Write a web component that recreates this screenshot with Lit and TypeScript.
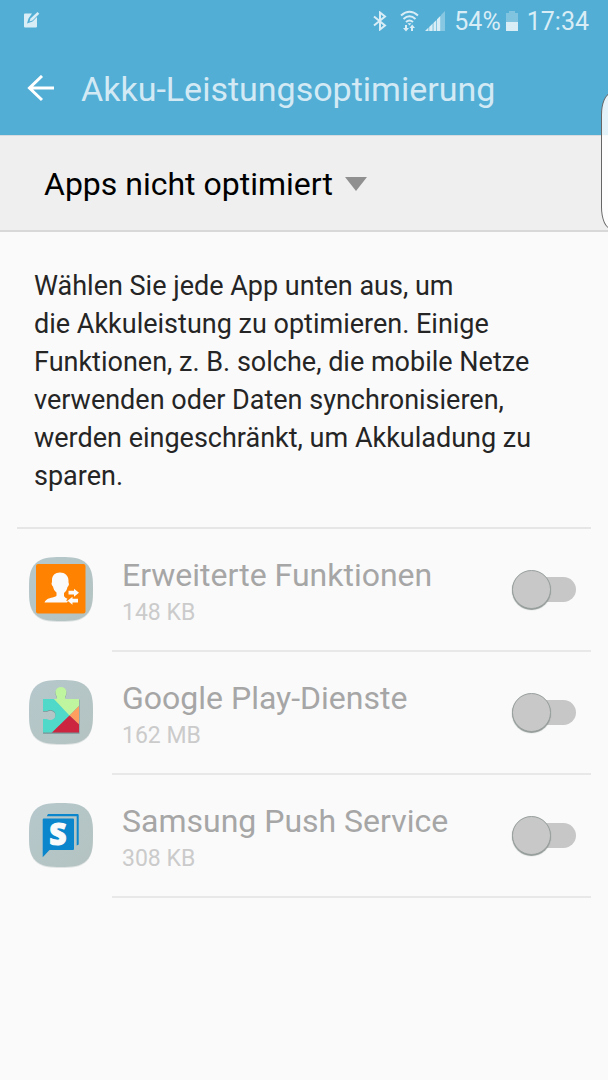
import { LitElement, html, css, svg } from "lit";
import { customElement, property } from "lit/decorators.js";

type IconName = "contacts" | "play" | "push";

interface AppEntry {
  id: string;
  name: string;
  size: string;
  icon: IconName;
}

const APPS: AppEntry[] = [
  { id: "extended", name: "Erweiterte Funktionen", size: "148 KB", icon: "contacts" },
  { id: "play", name: "Google Play-Dienste", size: "162 MB", icon: "play" },
  { id: "push", name: "Samsung Push Service", size: "308 KB", icon: "push" },
];

const GLYPHS = {
  contacts: svg`
    <rect x="8" y="8" width="49.500" height="49.500" rx="2" fill="#ff8200" />
    <path fill="#fafafa" d="M32 16.500c5 0 8.500 3.500 8.500 8 0 1.500 0 2.500.5 3.500-.2 1.500-.8 2.300-1.500 3-.5 2.500-1.500 4.500-3.500 6v3c.8 1.500 2 2.200 3.500 2.800l-1.500 1.700 2 .5-1 1.500h-22.500c1.500-3.500 4-4 8-5 2.500-.7 3.800-1 4-2v-3c-2-1.500-3-3.500-3.500-6-.8-.7-1.300-1.500-1.500-3 .5-1 .5-2 .5-3.500 0-4.500 3-7.500 8-7.500z" />
    <path fill="#fafafa" d="M40.500 34.800h5.500v-2l5 4-5 4v-2.200h-5.500z" />
    <path fill="#fafafa" d="M50 42.800h-5.500v-2l-5 4 5 4v-2.200H50z" />`,
  play: svg`
    <path fill="#5f7f82" opacity=".7" transform="translate(0 .8)" d="M15 20h13c1.500 0 1-2 0-4-1.500-4 .5-8 5-8s6.500 4 5 8c-1 2-1.500 4 0 4h13.500v34H15V40h3c2 0 3 1.500 5 1 6-1 6-9 0-10-2-.5-3 1-5 1h-3z" />
    <clipPath id="piece"><path d="M15 20h13c1.500 0 1-2 0-4-1.500-4 .5-8 5-8s6.500 4 5 8c-1 2-1.500 4 0 4h13v33.500H15V40h3c2 0 3 1.500 5 1 6-1 6-9 0-10-2-.5-3 1-5 1h-3z" /></clipPath>
    <g clip-path="url(#piece)">
      <path fill="#50d8c8" d="M15 19h11l16 17-18 18h-9z" />
      <path fill="#c0f5a0" d="M25 19V7h26v20l-9.500 9.500z" />
      <path fill="#ff9e5e" d="M51.500 26.500v19.500l-10-9.500z" />
      <path fill="#cb2540" d="M41.500 36.500l10 9.500v8H23.500z" />
    </g>`,
  push: svg`
    <path fill="#0b86cc" d="M20 12h29.500q1.200 0 1.200 1.200V42.500l-2 1V14.200H18.700z" />
    <path fill="#0b86cc" d="M15.700 16.500h29.300q1 0 1 1V47q0 1-1 1H21.500L14.700 55.300V17.500q0-1 1-1z" />
    <text x="30" y="43" text-anchor="middle" class="glyph">S</text>`,
};

@customElement("app-icon")
export class AppIcon extends LitElement {
  @property() name: IconName = "contacts";

  static styles = css`
    :host { display: block; flex: none; }
    .icon { display: block; }
    .glyph { font: 800 30px "Open Sans", sans-serif; fill: #fafafa; stroke: #fafafa; stroke-width: 1px; }
  `;

  render() {
    return html`
      <svg class="icon" width="66" height="70" viewBox="0 0 66 70" aria-hidden="true">
        <defs>
          <linearGradient id="plate" x1="0" y1="0" x2="1" y2="1">
            <stop offset="0" stop-color="#b6c8cc" />
            <stop offset="1" stop-color="#b4c3c1" />
          </linearGradient>
        </defs>
        <path fill="#d9dddd" opacity=".8" transform="translate(0 1)" d="M33 1C44 1 52.500 1.500 58.500 7.500S65 22 65 33 64.500 52.500 58.500 58.500 44 65 33 65 13.500 64.500 7.500 58.500 1 44 1 33 1.500 13.500 7.500 7.500 22 1 33 1z" />
        <path fill="url(#plate)" d="M33 1C44 1 52.500 1.500 58.500 7.500S65 22 65 33 64.500 52.500 58.500 58.500 44 65 33 65 13.500 64.500 7.500 58.500 1 44 1 33 1.500 13.500 7.500 7.500 22 1 33 1z" />
        ${GLYPHS[this.name]}
      </svg>`;
  }
}

@customElement("status-bar")
export class StatusBar extends LitElement {
  static styles = css`
    :host {
      display: flex;
      align-items: center;
      justify-content: space-between;
      height: 42px;
      padding: 0 19px 0 22px;
      color: #d9edf6;
      font-size: 25px;
      line-height: 32px;
    }
    .group { display: flex; align-items: center; }
    .label { padding-top: 2px; }
    .bluetooth { margin-right: 13px; }
    .wifi { margin-right: 6px; }
    .signal { margin-right: 9px; }
    .battery { margin: 0 9px 0 5px; }
  `;

  render() {
    return html`
      <svg width="18" height="18" viewBox="0 0 18 18" fill="currentColor" aria-hidden="true">
        <path d="M3 1.500h7L6.500 6.500 5 11.500l5.500-2L15 5v9.500a1 1 0 0 1-1 1H3a1 1 0 0 1-1-1v-12a1 1 0 0 1 1-1z" />
        <path d="M15.500 0l1.800 1.700L10.500 8.500 7.500 9.500l1-3z" />
      </svg>
      <div class="group">
        <svg class="bluetooth" width="14" height="20" viewBox="0 0 14 20" fill="none" stroke="currentColor" stroke-width="2" aria-hidden="true">
          <path d="M1 5.500l11 9L7 18.500V1.500l5 4-11 9" />
        </svg>
        <svg class="wifi" width="19" height="22" viewBox="0 0 19 22" fill="none" stroke="currentColor" stroke-width="2" aria-hidden="true">
          <path d="M1 5.500Q9.500-2 18 5.500M3.500 9Q9.500 3.500 15.500 9M6 12Q9.500 9 13 12" />
          <path fill="currentColor" stroke="none" d="M7.500 13.300h4L9.500 15.500zM5 15h2v3h2l-3 3.500L3 18h2zM13 21h-2v-3H9.500l2.700-3.500L15 18h-2z" />
        </svg>
        <svg class="signal" width="20" height="20" viewBox="0 0 20 20" fill="currentColor" aria-hidden="true">
          <path d="M0 20l3.500-3.500V20zM4.200 16l3.500-3.500V20H4.200zM8.400 12l3-3v11h-3zM12 8.200L15.500 4.700V20H12z" />
          <path opacity=".4" d="M16 4l4-4v20h-4z" />
        </svg>
        <span class="label">54%</span>
        <svg class="battery" width="12" height="20" viewBox="0 0 12 20" fill="currentColor" aria-hidden="true">
          <path opacity=".35" d="M3 0h6v2h3v9H0V2h3z" />
          <path d="M0 11h12v9H0z" />
        </svg>
        <time class="label">17:34</time>
      </div>`;
  }
}

@customElement("app-root")
export class AppRoot extends LitElement {
  static styles = css`
    :host {
      display: block;
      position: relative;
      min-height: 100vh;
      overflow: hidden;
      background: #fafafa;
      font-family: Roboto, sans-serif;
    }
    .header { background: #52aed5; }
    .title-bar {
      display: flex;
      align-items: center;
      height: 93px;
      gap: 26px;
      padding: 0 27px;
    }
    .back {
      display: flex;
      padding: 0;
      border: 0;
      background: none;
      color: #fff;
    }
    .title {
      margin: 0;
      color: #d3eaf5;
      font-size: 34px;
      font-weight: 400;
      line-height: 40px;
    }
    .filter {
      display: flex;
      align-items: center;
      gap: 12px;
      box-sizing: border-box;
      height: 97px;
      padding: 2px 44px 0;
      background: #efefef;
      border-top: 1px solid #d8dcde;
      border-bottom: 2px solid #d8d8d8;
    }
    .filter-select {
      appearance: none;
      field-sizing: content;
      margin: 0;
      padding: 0;
      border: 0;
      background: none;
      color: #000;
      font: 400 32px/40px Roboto, sans-serif;
    }
    .intro {
      margin: 0;
      padding: 35px 34px 32px;
      color: #252525;
      font-size: 27px;
      line-height: 38px;
    }
    .list {
      margin: 0 17px;
      padding: 0;
      border-top: 2px solid #e6e6e6;
      list-style: none;
    }
    .row {
      display: flex;
      align-items: center;
      height: 123px;
      padding-left: 11px;
    }
    .body {
      display: flex;
      flex: 1;
      align-items: center;
      box-sizing: border-box;
      height: 100%;
      margin-left: 18px;
      padding: 0 15px 0 10px;
      border-bottom: 2px solid #e8e8e8;
    }
    .text {
      flex: 1;
      padding-top: 7px;
    }
    .name {
      display: block;
      color: #a6a6a6;
      font-size: 32px;
      line-height: 40px;
    }
    .size {
      display: block;
      color: #cbcbcb;
      font-size: 23px;
      line-height: 36px;
    }
    .switch {
      appearance: none;
      display: flex;
      align-items: center;
      flex: none;
      width: 64px;
      height: 25px;
      margin: 0;
      background: #c7c7c7;
      border-radius: 13px;
    }
    .switch::before {
      content: "";
      box-sizing: border-box;
      flex: none;
      width: 39px;
      height: 39px;
      border: 1px solid #98a09e;
      border-radius: 50%;
      background: #c8c8c8;
      box-shadow: 0 1px 1px #8e9694;
    }
    .switch:checked { justify-content: flex-end; }
    .edge {
      position: absolute;
      top: 93px;
      right: -13px;
      box-sizing: border-box;
      width: 20px;
      height: 136px;
      border: 1px solid #666;
      border-radius: 12px / 26px;
      background: rgba(255, 255, 255, 0.84);
    }
  `;

  render() {
    return html`
      <header class="header">
        <status-bar></status-bar>
        <div class="title-bar">
          <button class="back" type="button" aria-label="Zurück">
            <svg width="28" height="28" viewBox="0 0 28 28" fill="none" stroke="currentColor" stroke-width="3" aria-hidden="true">
              <path d="M27 13H3M15 1L2.500 13 15 25" />
            </svg>
          </button>
          <h1 class="title">Akku-Leistungsoptimierung</h1>
        </div>
      </header>
      <div class="filter">
        <select class="filter-select" aria-label="Filter">
          <option selected>Apps nicht optimiert</option>
          <option>Alle Apps</option>
        </select>
        <svg width="22" height="14" viewBox="0 0 22 14" aria-hidden="true">
          <path fill="#909090" d="M0 0h22L11 14z" />
        </svg>
      </div>
      <p class="intro">
        Wählen Sie jede App unten aus, um die&nbsp;Akkuleistung zu optimieren. Einige Funktionen,
        z.&nbsp;B. solche, die mobile Netze verwenden oder Daten synchronisieren, werden
        eingeschränkt, um Akkuladung zu sparen.
      </p>
      <ul class="list">
        ${APPS.map(
          (app) => html`
            <li class="row">
              <app-icon .name=${app.icon}></app-icon>
              <div class="body">
                <label class="text" for=${app.id}>
                  <span class="name">${app.name}</span>
                  <span class="size">${app.size}</span>
                </label>
                <input class="switch" id=${app.id} type="checkbox" role="switch" disabled />
              </div>
            </li>`
        )}
      </ul>
      <div class="edge"></div>`;
  }
}
